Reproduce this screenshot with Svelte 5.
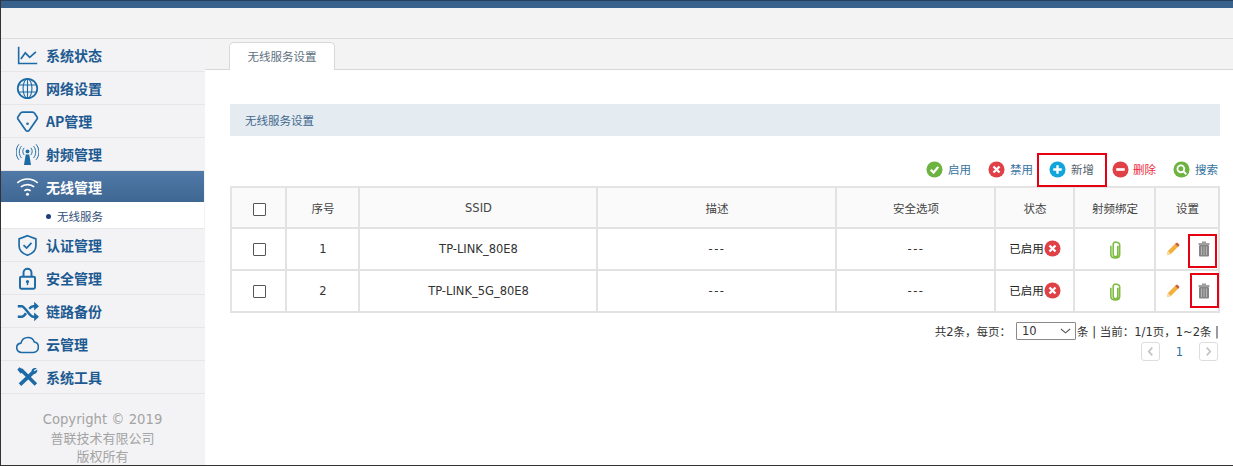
<script>
  const menu = [
    { key: 'chart', label: '系统状态' },
    { key: 'globe', label: '网络设置' },
    { key: 'ap', label: 'AP管理' },
    { key: 'radio', label: '射频管理' },
    { key: 'wifi', label: '无线管理', active: true },
    { key: 'shield', label: '认证管理' },
    { key: 'lock', label: '安全管理' },
    { key: 'shuffle', label: '链路备份' },
    { key: 'cloud', label: '云管理' },
    { key: 'tools', label: '系统工具' }
  ]
  const rows = [
    { id: 1, ssid: 'TP-LINK_80E8' },
    { id: 2, ssid: 'TP-LINK_5G_80E8' }
  ]
</script>

{#snippet menuIcon(key)}
  <svg class="micon" viewBox="0 0 26 26" fill="none" stroke="currentColor" stroke-width="1.7">
    {#if key === 'chart'}
      <path d="M3 3v19h21" stroke-width="1.8" />
      <path d="M5.500 17l5-7 5 5 7-6" stroke-width="1.900" />
    {:else if key === 'globe'}
      <circle cx="13" cy="13" r="11" stroke-width="2" />
      <ellipse cx="13" cy="13" rx="5" ry="11" stroke-width="1.300" />
      <path d="M13 2v22M3 9h20M3 17h20" stroke-width="1.300" />
    {:else if key === 'ap'}
      <path d="M7.500 2.500h11c1.200 0 2 .5 2.700 1.500L24 8.200c.3.600.3 1.100 0 1.700l-9 13c-1 1.400-3 1.400-4 0l-9-13c-.3-.6-.3-1.100 0-1.700L4.800 4c.7-1 1.500-1.500 2.700-1.500z" stroke-width="1.900" />
      <circle cx="13" cy="15.500" r="1.500" fill="currentColor" stroke="none" />
    {:else if key === 'radio'}
      <path d="M11 13L9 25h8L15 13z" fill="currentColor" stroke="none" />
      <circle cx="13" cy="9.500" r="2.200" fill="currentColor" stroke="none" />
      <path d="M9.200 5.500c-2 2.500-2 5.500 0 8M16.800 5.500c2 2.500 2 5.500 0 8M6.200 3.500c-3.300 4-3.300 9.500 0 13.500M19.800 3.500c3.300 4 3.300 9.500 0 13.500M3.300 1.500c-4.200 5-4.200 12.500 0 17.500M22.700 1.500c4.200 5 4.200 12.500 0 17.500" stroke-width="1.100" />
    {:else if key === 'wifi'}
      <path d="M1.500 9c6.800-6 16.200-6 23 0M5.500 13.500c4.200-3.600 10.800-3.600 15 0M9.500 18c2-1.600 5-1.600 7 0" stroke-width="1.900" />
      <circle cx="13" cy="21.800" r="1.700" fill="currentColor" stroke="none" />
    {:else if key === 'shield'}
      <path d="M13 2l9.500 3.500v8c0 5-4 8.500-9.500 10.500C7.500 22 3.500 18.500 3.500 13.500v-8z" stroke-width="1.900" />
      <path d="M8.500 12.500l3.500 3.500 5.500-6" stroke-width="1.900" />
    {:else if key === 'lock'}
      <rect x="4.500" y="11" width="17" height="13.500" rx="1.500" stroke-width="2.200" />
      <path d="M8.500 11V6.500a4.500 4.500 0 0 1 9 0V11" stroke-width="2.200" />
      <circle cx="13" cy="16.500" r="1.800" fill="currentColor" stroke="none" />
      <path d="M13 17v3.500" stroke-width="1.600" />
    {:else if key === 'shuffle'}
      <path d="M2 7h4.500c4 0 8.500 12 13 12H22M2 19h4.500c1.800 0 3.300-1.800 4.800-4M15 10c1.300-1.700 2.900-3 4.500-3H22" stroke-width="2.800" />
      <path d="M20.500 2l5.500 5-5.500 5zM20.500 14l5.500 5-5.500 5z" fill="currentColor" stroke="none" />
    {:else if key === 'cloud'}
      <path d="M6.500 22C3 22 .8 19.600.8 16.600c0-2.800 2-4.900 4.800-5.200C6.600 7.500 9.800 5 13.500 5c3.400 0 6.200 2 7.200 5.200 2.900.4 4.600 3 4.600 5.700 0 3.400-2.500 6.100-5.800 6.100z" stroke-width="1.800" />
    {:else if key === 'tools'}
      <path d="M5.500 4l17 17" stroke-width="4" />
      <path d="M19 7.500L4.500 21" stroke-width="4.200" />
      <path d="M23.500 2.500c-3-.9-6.500.8-6 4.500l2 2c3 .5 5-2.200 4.500-5l-3 2-1-1z" fill="currentColor" stroke="none" />
      <path d="M1.500 4L4 1.500l4.500 3-1.500 3-2 1z" fill="currentColor" stroke="none" />
    {/if}
  </svg>
{/snippet}

{#snippet roundIcon(color, shape)}
  <svg class="ricon" viewBox="0 0 18 18">
    <circle cx="9" cy="9" r="8.500" fill={color} />
    {#if shape === 'check'}
      <path d="M5 9.200l3 3 5-6" fill="none" stroke="#fff" stroke-width="2.400" />
    {:else if shape === 'cross'}
      <path d="M5.800 5.800l6.400 6.400M12.200 5.800l-6.400 6.400" fill="none" stroke="#fff" stroke-width="2.500" />
    {:else if shape === 'plus'}
      <path d="M9 4.500v9M4.500 9h9" fill="none" stroke="#fff" stroke-width="2.500" />
    {:else if shape === 'minus'}
      <path d="M4.500 9h9" fill="none" stroke="#fff" stroke-width="2.800" />
    {:else if shape === 'search'}
      <circle cx="8.300" cy="8.300" r="3.600" fill="none" stroke="#fff" stroke-width="1.900" />
      <path d="M11 11l3 3" stroke="#fff" stroke-width="2.200" />
    {/if}
  </svg>
{/snippet}

{#snippet tableRow(row)}
  <tr>
    <td><span class="check"></span></td>
    <td>{row.id}</td>
    <td>{row.ssid}</td>
    <td><span class="dash">---</span></td>
    <td><span class="dash">---</span></td>
    <td><span class="state">已启用{@render roundIcon('#df4147', 'cross')}</span></td>
    <td>
      <svg class="clip" viewBox="0 0 14 20" fill="none" stroke="#7dbb42" stroke-width="1.700">
        <path d="M9.500 6v9c0 1.600-1 2.800-2.500 2.800S4.500 16.600 4.500 15V4.500C4.500 3 5.500 2 7 2s4.500 1 4.500 2.500v10.500c0 2.800-2 4-4.500 4S2 17.800 2 15V6" />
      </svg>
    </td>
    <td>
      <div class="ops">
        <svg class="pencil" viewBox="0 0 16 16">
          <path d="M1 15l1.200-4.600 8-8 3.400 3.400-8 8z" fill="#f3b03c" />
          <path d="M10.200 2.400l1.300-1.300c.6-.5 1.300-.5 1.800 0l1.600 1.600c.5.500.5 1.200 0 1.800l-1.300 1.300z" fill="#c9603a" />
          <path d="M1 15l1.200-4.600 3.400 3.400z" fill="#f8dfa6" />
        </svg>
        <svg class="trash" viewBox="0 0 12 16">
          <path d="M4 .5h4v1.800H4z" fill="#9a9a9a" />
          <rect x="0.500" y="2" width="11" height="2" fill="#a0a0a0" />
          <rect x="1" y="4" width="10" height="11.500" rx="1" fill="#858585" />
          <path d="M3.500 5.500v8.500M6 5.500v8.500M8.500 5.500v8.500" stroke="#b4b4b4" stroke-width="1" />
        </svg>
      </div>
    </td>
  </tr>
{/snippet}

<div class="frame">
  <div class="topbar"></div>
  <div class="subbar"></div>
  <div class="body">
    <aside class="side">
      <nav>
        {#each menu as item}
          <div class="item" class:active={item.active}>
            {@render menuIcon(item.key)}
            <span>{item.label}</span>
          </div>
          {#if item.active}
            <div class="subitem"><i></i>无线服务</div>
          {/if}
        {/each}
      </nav>
      <div class="copy">
        <div class="latin">Copyright © 2019</div>
        <div>普联技术有限公司</div>
        <div>版权所有</div>
      </div>
    </aside>

    <main class="main">
      <div class="tabs">
        <div class="tab">无线服务设置</div>
      </div>
      <div class="content">
        <div class="section">无线服务设置</div>
        <div class="toolbar">
          <div class="tool">{@render roundIcon('#6cb33f', 'check')}<span>启用</span></div>
          <div class="tool">{@render roundIcon('#df4147', 'cross')}<span>禁用</span></div>
          <div class="tool add">{@render roundIcon('#12a5dc', 'plus')}<span class="dark">新增</span></div>
          <div class="tool del">{@render roundIcon('#df4147', 'minus')}<span class="red">删除</span></div>
          <div class="tool">{@render roundIcon('#6cb33f', 'search')}<span>搜索</span></div>
        </div>
        <table>
          <colgroup>
            <col style="width:55px" />
            <col style="width:73px" />
            <col style="width:238px" />
            <col style="width:239px" />
            <col style="width:159px" />
            <col style="width:79px" />
            <col style="width:81px" />
            <col />
          </colgroup>
          <thead>
            <tr>
              <th><span class="check"></span></th>
              <th>序号</th>
              <th class="latin-cell">SSID</th>
              <th>描述</th>
              <th>安全选项</th>
              <th>状态</th>
              <th>射频绑定</th>
              <th>设置</th>
            </tr>
          </thead>
          <tbody>
            {#each rows as row}
              {@render tableRow(row)}
            {/each}
          </tbody>
        </table>
        <div class="pager">
          <div class="pager-line">
            <span>共2条，每页：</span>
            <span class="select">10
              <svg viewBox="0 0 12 6" fill="none" stroke="#555" stroke-width="1.200"><path d="M1 .8l5 4.200 5-4.200" /></svg>
            </span>
            <span>条 | 当前：1/1页，1~2条 |</span>
          </div>
          <div class="pager-nav">
            <span class="pg"><svg viewBox="0 0 8 12" fill="none" stroke="#c4c4c4" stroke-width="2"><path d="M6 1.500L2 6l4 4.500" /></svg></span>
            <span class="num">1</span>
            <span class="pg"><svg viewBox="0 0 8 12" fill="none" stroke="#c4c4c4" stroke-width="2"><path d="M2 1.500L6 6l-4 4.500" /></svg></span>
          </div>
        </div>
      </div>
    </main>
  </div>

  <!-- annotations drawn over the screenshot -->
  <div class="mark m1"></div>
  <div class="mark m2"></div>
  <div class="mark m3"></div>
</div>

<style>
  :global(body) {
    margin: 0;
    background: #fff;
  }

  .frame {
    position: relative;
    width: 1233px;
    height: 466px;
    box-sizing: border-box;
    overflow: hidden;
    display: flex;
    flex-direction: column;
    border-left: 1px solid #333;
    border-bottom: 1px solid #333;
    font-family: "DejaVu Sans", "Noto Sans CJK SC", sans-serif;
    font-size: 11.5px;
    color: #333;
  }

  .topbar {
    height: 8px;
    flex: none;
    background: #38618c;
    border-top: 1px solid #24405e;
    box-sizing: border-box;
  }

  .subbar {
    height: 31px;
    flex: none;
    background: #f3f3f3;
    border-bottom: 1px solid #dcdcdc;
    box-sizing: border-box;
  }

  .body {
    flex: 1;
    display: flex;
    min-height: 0;
  }

  .side {
    width: 204px;
    flex: none;
    background: #f3f3f5;
    display: flex;
    flex-direction: column;
  }

  .item {
    height: 33px;
    box-sizing: border-box;
    display: flex;
    align-items: center;
    padding-left: 15px;
    gap: 7px;
    border-bottom: 1px solid #e6e6e6;
    font-family: "Noto Sans CJK SC", sans-serif;
    font-size: 14px;
    font-weight: 700;
    color: #1d5a91;
  }

  .item.active {
    background: linear-gradient(#5079a8, #3f6793);
    color: #fff;
    border-bottom: none;
    height: 31px;
    width: 203px;
  }

  .micon {
    width: 23px;
    height: 23px;
    flex: none;
    color: #1c6ba6;
  }

  .active .micon {
    color: #fff;
  }

  .subitem {
    height: 27px;
    box-sizing: border-box;
    background: #fff;
    width: 203px;
    display: flex;
    align-items: center;
    padding: 2px 0 0 45px;
    gap: 6px;
    font-family: "Noto Sans CJK SC", sans-serif;
    font-size: 11.5px;
    color: #36507d;
    border-bottom: 1px solid #e6e6e6;
  }

  .subitem i {
    width: 5px;
    height: 5px;
    flex: none;
    border-radius: 50%;
    background: #1a3f7c;
  }

  .copy {
    margin-top: 17px;
    width: 203px;
    text-align: center;
    font-size: 13px;
    line-height: 18px;
    color: #a3a3a3;
    font-family: "Noto Sans CJK SC", sans-serif;
  }

  .copy div {
    height: 18px;
  }

  .copy .latin {
    font-family: "DejaVu Sans", sans-serif;
    font-size: 13.2px;
  }

  .main {
    flex: 1;
    min-width: 0;
    display: flex;
    flex-direction: column;
  }

  .tabs {
    height: 31px;
    flex: none;
    box-sizing: border-box;
    background: #f3f3f3;
    border-bottom: 1px solid #d8d8d8;
    padding-left: 24px;
    display: flex;
    align-items: flex-end;
  }

  .tab {
    width: 106px;
    height: 28px;
    box-sizing: border-box;
    margin-bottom: -1px;
    background: #fff;
    border: 1px solid #d8d8d8;
    border-bottom: none;
    border-radius: 5px 5px 0 0;
    text-align: center;
    line-height: 27px;
    color: #5d6f80;
    font-family: "Noto Sans CJK SC", sans-serif;
    font-size: 11.5px;
  }

  .content {
    padding: 34px 13px 0 25px;
  }

  .section {
    height: 32px;
    background: #e4ecf2;
    line-height: 33px;
    padding-left: 15px;
    color: #43688c;
    font-family: "Noto Sans CJK SC", sans-serif;
    font-size: 11.5px;
  }

  .toolbar {
    height: 50px;
    display: flex;
    justify-content: flex-end;
    align-items: center;
    padding-top: 16px;
    box-sizing: border-box;
    padding-right: 2px;
    font-family: "Noto Sans CJK SC", sans-serif;
    font-size: 11.5px;
    color: #36739f;
  }

  .tool {
    display: flex;
    align-items: center;
    gap: 5px;
    margin-left: 17px;
  }

  .tool.add {
    margin-left: 16px;
  }

  .tool.del {
    margin-left: 18px;
    gap: 4px;
  }

  .dark {
    color: #55646f;
  }

  .red {
    color: #ee2a3c;
  }

  .ricon {
    width: 17px;
    height: 17px;
    flex: none;
  }

  table {
    width: 990px;
    border-collapse: collapse;
    table-layout: fixed;
    border: 2px solid #e4e4e4;
    font-size: 11.5px;
    color: #333;
  }

  th,
  td {
    border: 1px solid #e2e2e2;
    border-width: 0 2px 2px 0;
    text-align: center;
    padding: 0 0 0 1px;
    font-weight: 400;
  }

  th {
    height: 39px;
    background: #fafafa;
    font-family: "Noto Sans CJK SC", "DejaVu Sans", sans-serif;
    color: #444;
  }

  th.latin-cell {
    font-family: "DejaVu Sans", sans-serif;
  }

  td {
    height: 40px;
  }

  .dash {
    letter-spacing: 1.500px;
  }

  .check {
    display: inline-block;
    vertical-align: middle;
    width: 11px;
    height: 11px;
    border: 1.500px solid #555;
    border-radius: 1px;
    background: #fff;
  }

  .state {
    display: inline-flex;
    align-items: center;
    font-family: "Noto Sans CJK SC", sans-serif;
    color: #222;
    position: relative;
    top: -1px;
  }

  .clip {
    width: 13px;
    height: 19px;
    vertical-align: middle;
  }

  .ops {
    display: flex;
    justify-content: flex-end;
    align-items: center;
    gap: 18px;
    padding-right: 8px;
  }

  .pencil {
    width: 14px;
    height: 14px;
  }

  .trash {
    width: 12px;
    height: 16px;
  }

  .pager {
    margin-top: 8px;
    text-align: right;
    font-size: 11.5px;
    color: #333;
    padding-right: 1px;
  }

  .pager-line {
    display: flex;
    justify-content: flex-end;
    align-items: center;
    height: 20px;
    white-space: pre;
  }

  .select {
    width: 60px;
    height: 18px;
    box-sizing: border-box;
    border: 1px solid #8a8a8a;
    border-radius: 1px;
    margin: 0 1px 0 5px;
    padding-left: 5px;
    display: flex;
    align-items: center;
    justify-content: space-between;
    padding-right: 4px;
  }

  .select svg {
    width: 11px;
    height: 6px;
  }

  .pager-nav {
    display: flex;
    justify-content: flex-end;
    align-items: center;
    gap: 16px;
    margin-top: 1px;
    padding-right: 1px;
  }

  .pg {
    width: 19px;
    height: 19px;
    box-sizing: border-box;
    border: 1px solid #ddd;
    border-radius: 3px;
    display: flex;
    align-items: center;
    justify-content: center;
  }

  .pg svg {
    width: 7px;
    height: 11px;
  }

  .num {
    color: #2f6fa8;
  }

  .mark {
    position: absolute;
    border: 2px solid #e60012;
    box-sizing: border-box;
  }

  .m1 {
    left: 1036px;
    top: 153px;
    width: 70px;
    height: 34px;
  }

  .m2 {
    left: 1187px;
    top: 234px;
    width: 29px;
    height: 34px;
  }

  .m3 {
    left: 1189px;
    top: 273px;
    width: 29px;
    height: 35px;
  }
</style>
